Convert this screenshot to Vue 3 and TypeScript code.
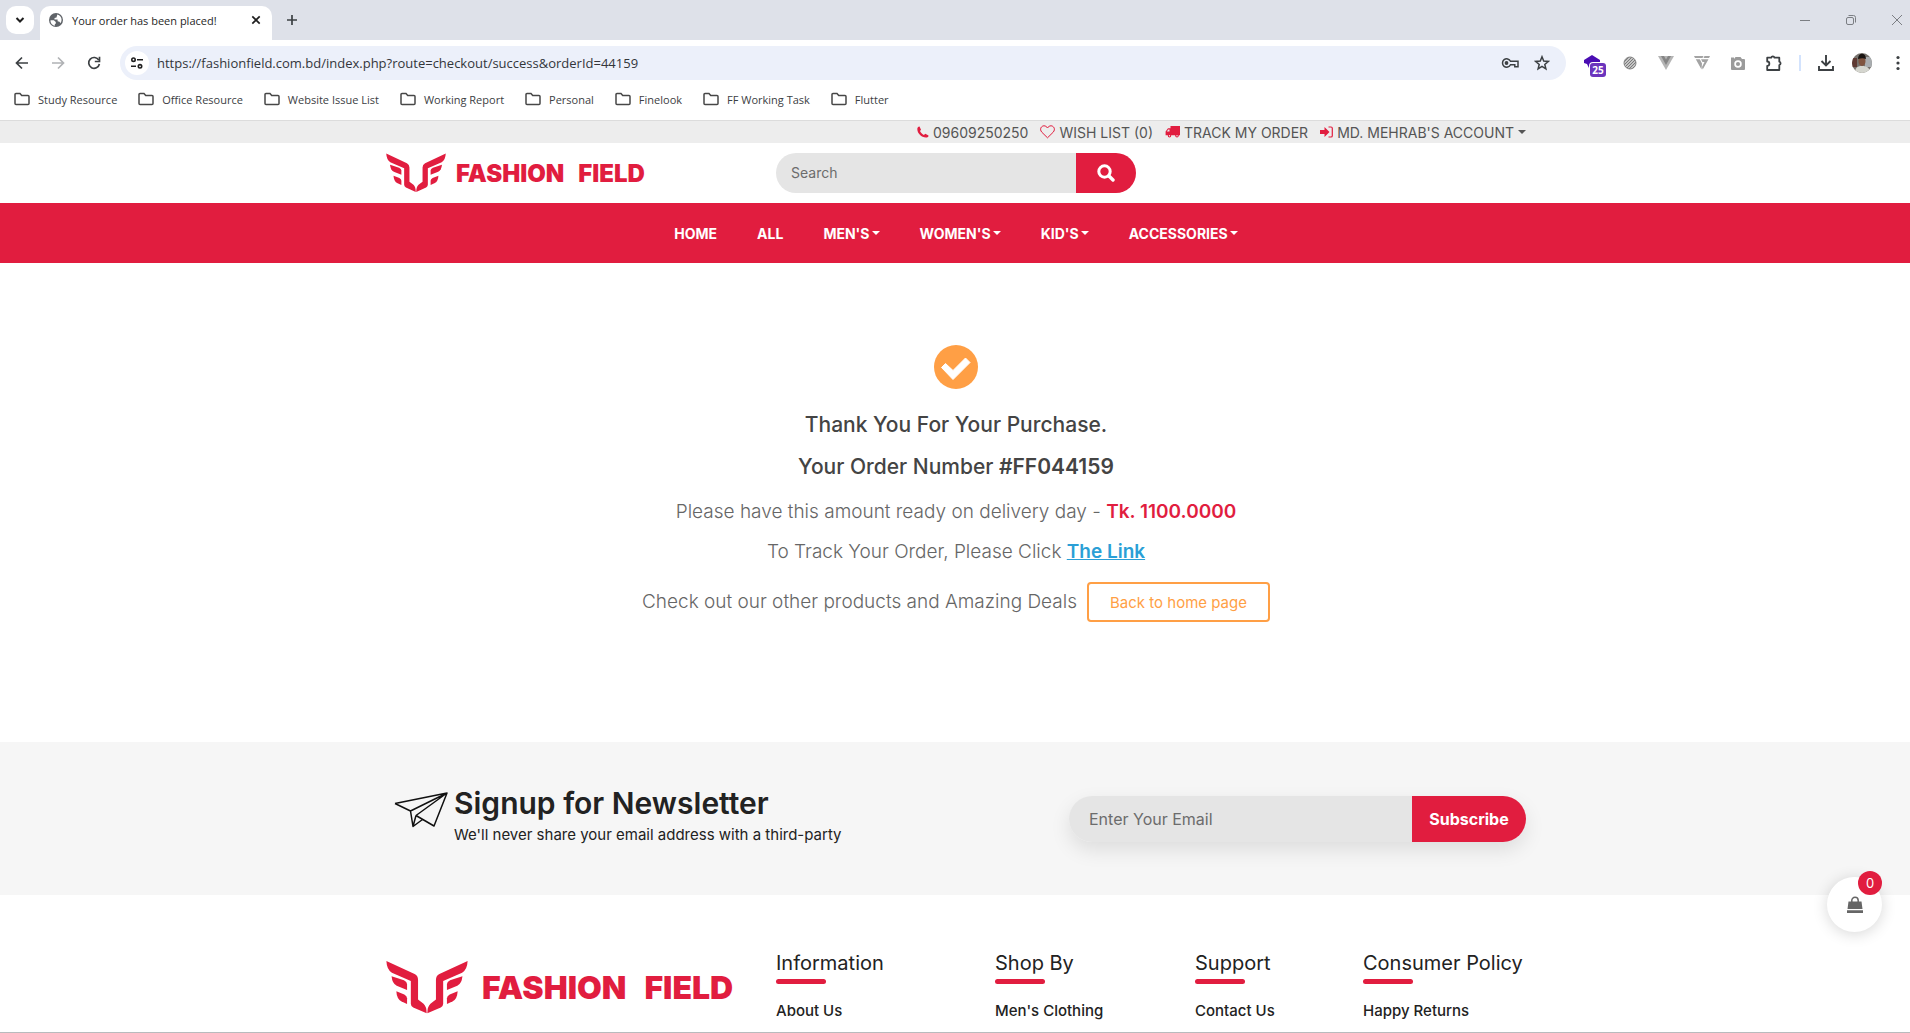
<script setup lang="ts">
import { ref } from 'vue'

interface Column {
  title: string
  link: string
}

const address = ref('https://fashionfield.com.bd/index.php?route=checkout/success&orderId=44159')
const search = ref('')
const email = ref('')

const bookmarks: string[] = [
  'Study Resource',
  'Office Resource',
  'Website Issue List',
  'Working Report',
  'Personal',
  'Finelook',
  'FF Working Task',
  'Flutter',
]

const menu: { label: string; drop: boolean }[] = [
  { label: 'HOME', drop: false },
  { label: 'ALL', drop: false },
  { label: "MEN'S", drop: true },
  { label: "WOMEN'S", drop: true },
  { label: "KID'S", drop: true },
  { label: 'ACCESSORIES', drop: true },
]

const columns: Column[] = [
  { title: 'Information', link: 'About Us' },
  { title: 'Shop By', link: "Men's Clothing" },
  { title: 'Support', link: 'Contact Us' },
  { title: 'Consumer Policy', link: 'Happy Returns' },
]
</script>

<template>
  <div class="window">
    <div class="tabstrip">
      <button class="tab-search" aria-label="Search tabs">
        <svg width="12" height="12" viewBox="0 0 12 12"><path d="M2.500 4 6 7.500 9.500 4" fill="none" stroke="#1f1f1f" stroke-width="2" /></svg>
      </button>
      <div class="tab">
        <svg width="14" height="14" viewBox="0 0 14 14">
          <circle cx="7" cy="7" r="7" fill="#5f6368" />
          <path d="M1.500 7.200h3.300l2 1.800v1.500l-1 .8v1.400C3.200 12.300 1.300 10 1.500 7.200zM8.300 1.500c2.600.5 4.400 2.700 4.300 5.500-.1 1.200-.5 2.300-1.200 3.200l-.9-1.500-1.900-.4V6.500H5.500V5l2-.5z" fill="#fff" />
        </svg>
        <span class="tab-title">Your order has been placed!</span>
        <button class="plain" aria-label="Close tab">
          <svg width="10" height="10" viewBox="0 0 10 10"><path d="M1.300 1.300 8.700 8.700M8.700 1.300 1.300 8.700" stroke="#1f1f1f" stroke-width="1.700" /></svg>
        </button>
      </div>
      <button class="plain new-tab" aria-label="New tab">
        <svg width="12" height="12" viewBox="0 0 12 12"><path d="M6 1v10M1 6h10" stroke="#3c4043" stroke-width="1.700" /></svg>
      </button>
      <div class="controls">
        <button class="plain" aria-label="Minimize"><svg width="12" height="12" viewBox="0 0 12 12"><path d="M1 6.500h10" stroke="#7b7e83" /></svg></button>
        <button class="plain" aria-label="Restore"><svg width="12" height="12" viewBox="0 0 12 12"><g fill="none" stroke="#7b7e83"><rect x="1.500" y="3.500" width="7" height="7" rx="1.500" /><path d="M3.500 1.500h5a2 2 0 0 1 2 2v5" /></g></svg></button>
        <button class="plain" aria-label="Close"><svg width="12" height="12" viewBox="0 0 12 12"><path d="m1 1 10 10M11 1 1 11" stroke="#7b7e83" /></svg></button>
      </div>
    </div>

    <div class="toolbar">
      <div class="history">
        <button class="plain" aria-label="Back"><svg width="16" height="16" viewBox="0 0 16 16"><path d="M14 8H3M8 2.500 2.500 8 8 13.500" fill="none" stroke="#3c4043" stroke-width="1.700" /></svg></button>
        <button class="plain" aria-label="Forward"><svg width="16" height="16" viewBox="0 0 16 16"><path d="M2 8h11M8 2.500 13.500 8 8 13.500" fill="none" stroke="#b0b2b5" stroke-width="1.700" /></svg></button>
        <button class="plain" aria-label="Reload"><svg width="16" height="16" viewBox="0 0 16 16"><path d="M12.800 5.200A5.400 5.400 0 1 0 13.400 9" fill="none" stroke="#3c4043" stroke-width="1.700" /><path d="M13.500 1.800v4.700H8.800" fill="none" stroke="#3c4043" stroke-width="1.700" /></svg></button>
      </div>
      <div class="omnibox">
        <button class="site-info" aria-label="Site information">
          <svg width="14" height="14" viewBox="0 0 14 14"><g fill="none" stroke="#1f1f1f" stroke-width="1.600"><circle cx="3.500" cy="3.700" r="1.700" /><path d="M7 3.700h6M1 10.300h5" /><circle cx="10" cy="10.300" r="1.700" /></g></svg>
        </button>
        <input v-model="address" class="address" type="text" aria-label="Address" />
        <button class="plain" aria-label="Passwords">
          <svg width="18" height="12" viewBox="0 0 18 12"><path d="M9.500 4.200A4.200 4.200 0 1 0 9.500 7.800h4.300v2h3.200V4.200z" fill="none" stroke="#3c4043" stroke-width="1.500" /><circle cx="5.500" cy="6" r="1.900" fill="#3c4043" /></svg>
        </button>
        <button class="plain" aria-label="Bookmark this page">
          <svg width="16" height="16" viewBox="0 0 16 16"><path d="m8 1.800 1.700 4.300 4.600.3-3.500 3 1.100 4.500L8 11.400l-3.900 2.500 1.100-4.500-3.500-3 4.600-.3z" fill="none" stroke="#3c4043" stroke-width="1.500" /></svg>
        </button>
      </div>
      <div class="extensions">
        <button class="plain ext" aria-label="Extension, 25 items">
          <svg width="20" height="16" viewBox="0 0 20 16"><path d="m8 0 8 5v3l-3 5H5L3 9 0 8V5z" fill="#4a0db3" /></svg>
          <span class="ext-count">25</span>
        </button>
        <button class="plain ext" aria-label="Striped extension">
          <svg width="14" height="14" viewBox="0 0 14 14"><clipPath id="disc"><circle cx="7" cy="7" r="6" /></clipPath><circle cx="7" cy="7" r="6" fill="#e4e4e4" stroke="#8a8a8a" /><path d="M0 7 7 0M0 10 10 0M0 13 13 0M2 14 14 2M5 14l9-9M8 14l6-6" stroke="#777" stroke-width="1.100" clip-path="url(#disc)" /></svg>
        </button>
        <button class="plain ext" aria-label="Vue devtools">
          <svg width="16" height="14" viewBox="0 0 16 14"><path d="M0 0h16L8 14z" fill="#b5b5b5" /><path d="M3 0h3l2 3.500L10 0h3L8 9z" fill="#858585" /></svg>
        </button>
        <button class="plain ext" aria-label="Vuetify devtools">
          <svg width="16" height="14" viewBox="0 0 16 14"><path d="M0 0h9.500L8.500 2H1zM10.500 0H16l-1 2H9.500zM1.800 3.200h4L8 7.500l-.5 6zM7 3.200h7.500L8.700 13.500 8 11l2.500-5H8.500z" fill="#a3a3a3" /></svg>
        </button>
        <button class="plain ext" aria-label="Screenshot">
          <svg width="16" height="14" viewBox="0 0 16 14"><path d="M1 1.500h3V3l1.500-2h5L12 3h2a1 1 0 0 1 1 1v9a1 1 0 0 1-1 1H2a1 1 0 0 1-1-1z" fill="#9b9b9b" /><circle cx="8" cy="8" r="2.900" fill="#9b9b9b" stroke="#fff" stroke-width="1.700" /></svg>
        </button>
        <button class="plain ext" aria-label="Extensions">
          <svg width="18" height="18" viewBox="0 0 18 18"><path d="M2.200 3.700h4a1.700 1.700 0 0 1 3.300 0h4.800v4a1.700 1.700 0 0 1 0 3.300v5H2.200v-4.200a2 2 0 0 0 0-4.300z" fill="none" stroke="#3c4043" stroke-width="1.800" stroke-linejoin="round" /></svg>
        </button>
        <span class="divider"></span>
        <button class="plain ext" aria-label="Downloads">
          <svg width="16" height="16" viewBox="0 0 16 16"><path d="M8 0v10M3.500 6 8 10.500 12.500 6M1 11v4h14v-4" fill="none" stroke="#3c4043" stroke-width="1.900" /></svg>
        </button>
        <button class="plain ext" aria-label="Profile">
          <svg width="20" height="20" viewBox="0 0 20 20"><clipPath id="face"><circle cx="10" cy="10" r="10" /></clipPath><g clip-path="url(#face)"><path fill="#77736e" d="M0 0h20v20H0z" /><path fill="#a9adb0" d="M13 4h7v10h-7z" /><path fill="#5f3a33" d="M0 5h5v9H0z" /><path fill="#d5d6cf" d="M3 20c0-6 3-7 7-7s8 1 8 7z" /><ellipse cx="10" cy="8" rx="3.500" ry="5" fill="#80543f" /><path fill="#191412" d="M6 6c0-7 8-7 8 0-2-1-5-1-8 0z" /></g></svg>
        </button>
        <button class="plain ext" aria-label="Menu">
          <svg width="4" height="16" viewBox="0 0 4 16"><g fill="#3c4043"><circle cx="2" cy="2.500" r="1.600" /><circle cx="2" cy="8" r="1.600" /><circle cx="2" cy="13.500" r="1.600" /></g></svg>
        </button>
      </div>
    </div>

    <div class="bookmarks">
      <a v-for="name in bookmarks" :key="name" href="#" class="bookmark">
        <svg width="16" height="14" viewBox="0 0 16 14"><path d="M1 11.500v-9a1 1 0 0 1 1-1h4l1.700 2H14a1 1 0 0 1 1 1v7a1 1 0 0 1-1 1H2a1 1 0 0 1-1-1z" fill="none" stroke="#474747" stroke-width="1.500" /></svg>
        <span>{{ name }}</span>
      </a>
    </div>

    <svg class="symbols" width="0" height="0" aria-hidden="true">
      <symbol id="wings" viewBox="48 96 238 154">
        <g id="wing" fill="#e11d3f">
          <path d="M49 96 131 134Q141 139 141 151V208L157 220Q166 228 166 248L127 231Q120 227 120 220V154L65 130Q50 121 49 96Z" />
          <path d="M64 140 100 152Q109 156 109 163V180L79 168Q66 161 64 140Z" />
          <path d="M78 184 101 193Q109 197 109 204V221L92 213Q79 206 78 184Z" />
        </g>
        <use href="#wing" transform="translate(334 0) scale(-1 1)" />
      </symbol>
    </svg>

    <div class="topbar">
      <div class="container top-links">
        <a href="#">
          <svg width="12" height="12" viewBox="0 0 12 12"><path d="M2.500.6 4 3.800 3 5c.8 1.600 2.200 3 3.900 3.900l1.400-1.100 3.200 1.600c.2 1.400-1 2.200-2.500 2.200C4.300 11.300.3 7.400.3 3 .4 1.600 1.200.5 2.500.6z" fill="#e11d3f" /></svg>
          <span>09609250250</span>
        </a>
        <a href="#">
          <svg width="15" height="14" viewBox="0 0 15 14"><path d="M7.500 12.800 1.800 7.200C-.9 4 1.500.8 4 .8c1.600 0 2.800 1 3.500 2.200C8.200 1.800 9.400.8 11 .8c2.500 0 4.900 3.200 2.200 6.400z" fill="none" stroke="#e11d3f" /></svg>
          <span>WISH LIST (0)</span>
        </a>
        <a href="#">
          <svg width="15" height="12" viewBox="0 0 15 12"><path d="M5.500 0H15v9.300h-1.300a1.800 1.800 0 0 1-3.500 0H6.300a1.800 1.800 0 0 1-3.500 0H.6V5.500L3 2.200h2.500zM1.800 5.500h2.700v-2h-1.200z" fill="#e11d3f" fill-rule="evenodd" /><g fill="#e11d3f"><circle cx="4.500" cy="9.800" r="1.700" /><circle cx="12" cy="9.800" r="1.700" /></g><g fill="#ededed"><circle cx="4.500" cy="9.800" r=".7" /><circle cx="12" cy="9.800" r=".7" /></g></svg>
          <span>TRACK MY ORDER</span>
        </a>
        <a href="#">
          <svg width="13" height="12" viewBox="0 0 13 12"><path d="M0 4h4.500V1l5 5-5 5V8H0z" fill="#e11d3f" /><path d="M8.500 1H11a1.300 1.300 0 0 1 1.300 1.300v7.400A1.300 1.300 0 0 1 11 11H8.500" fill="none" stroke="#e11d3f" stroke-width="1.200" /></svg>
          <span>MD. MEHRAB'S ACCOUNT</span>
          <i class="caret"></i>
        </a>
      </div>
    </div>

    <header class="container masthead">
      <a href="#" class="logo" aria-label="Fashion Field">
        <svg class="mark"><use href="#wings" /></svg>
        <span>FASHION</span><span>FIELD</span>
      </a>
      <form class="search" @submit.prevent>
        <input v-model="search" type="text" placeholder="Search" aria-label="Search" />
        <button type="submit" aria-label="Search">
          <svg width="18" height="18" viewBox="0 0 18 18"><circle cx="7.500" cy="7.500" r="5.700" fill="none" stroke="#fff" stroke-width="3" /><path d="m12 12 4 4" stroke="#fff" stroke-width="3.400" stroke-linecap="round" /></svg>
        </button>
      </form>
    </header>

    <nav class="nav">
      <a v-for="item in menu" :key="item.label" href="#">{{ item.label }}<i v-if="item.drop" class="caret"></i></a>
    </nav>

    <main class="success">
      <svg width="44" height="44" viewBox="0 0 44 44"><circle cx="22" cy="22" r="22" fill="#ff9f45" /><path d="m7.500 22.500 4-4 7.500 7L31.500 13l4.500 4.500-17 17z" fill="#fff" stroke="#fff" stroke-width="1" stroke-linejoin="round" /></svg>
      <h1>Thank You For Your Purchase.</h1>
      <h2>Your Order Number <b>#FF044159</b></h2>
      <p>Please have this amount ready on delivery day - <b class="amount">Tk. 1100.0000</b></p>
      <p>To Track Your Order, Please Click <a href="#" class="track">The Link</a></p>
      <div class="deals">
        <p>Check out our other products and Amazing Deals</p>
        <button type="button">Back to home page</button>
      </div>
    </main>

    <section class="newsletter">
      <div class="container news-row">
        <svg width="54" height="36" viewBox="0 0 54 36"><path d="M1 11.500 53 1 40 34 22 23.500M1 11.500 16.500 19 53 1 22 23.500M16.500 19 19 34.500 22 23.500M19 34.500 28.500 27.500" fill="none" stroke="#111" stroke-width="1.500" stroke-linejoin="round" /></svg>
        <div class="news-text">
          <h3>Signup for Newsletter</h3>
          <p>We'll never share your email address with a third-party</p>
        </div>
        <form class="subscribe" @submit.prevent>
          <input v-model="email" type="email" placeholder="Enter Your Email" aria-label="Email" />
          <button type="submit">Subscribe</button>
        </form>
      </div>
    </section>

    <footer class="footer">
      <div class="container foot-grid">
        <a href="#" class="logo large" aria-label="Fashion Field">
          <svg class="mark"><use href="#wings" /></svg>
          <span>FASHION</span><span>FIELD</span>
        </a>
        <div v-for="column in columns" :key="column.title" class="column">
          <h4>{{ column.title }}</h4>
          <a href="#">{{ column.link }}</a>
        </div>
      </div>
    </footer>

    <button class="cart" aria-label="Cart">
      <svg width="18" height="18" viewBox="0 0 18 18"><path d="M2.500 5.500h13l1 7.500h-15zM1 14.200h16V17H1z" fill="#666" /><path d="M5.800 8V4.500a3.200 3.200 0 0 1 6.400 0V8" fill="none" stroke="#666" stroke-width="1.500" /></svg>
      <span>0</span>
    </button>
  </div>
</template>

<style>
body {
  margin: 0;
  background: #fff;
}
</style>

<style scoped>
.window {
  display: flex;
  flex-direction: column;
  min-height: 100vh;
  font-family: Inter, "Liberation Sans", sans-serif;
  color: #222;
}
.window *,
.window {
  box-sizing: border-box;
}
svg {
  display: block;
  flex: none;
}
.symbols {
  position: absolute;
}
button,
input {
  font-family: inherit;
  border: 0;
  padding: 0;
  margin: 0;
}
a {
  color: inherit;
  text-decoration: none;
}
h1, h2, h3, h4, p {
  margin: 0;
}
.plain {
  display: flex;
  align-items: center;
  justify-content: center;
  background: none;
}

/* browser frame */
.tabstrip,
.toolbar,
.bookmarks {
  font-family: "Open Sans", "Noto Sans", sans-serif;
}
.tabstrip {
  display: flex;
  align-items: center;
  height: 40px;
  background: #dee1e9;
}
.tab-search {
  display: flex;
  align-items: center;
  justify-content: center;
  width: 28px;
  height: 28px;
  margin: 0 6px;
  border-radius: 10px;
  background: #fff;
}
.tab {
  display: flex;
  align-items: center;
  align-self: flex-end;
  width: 232px;
  height: 34px;
  padding: 0 11px 6px 9px;
  border-radius: 10px 10px 0 0;
  background: #fff;
}
.tab-title {
  flex: 1;
  padding-left: 9px;
  font-size: 11px;
  color: #1f1f1f;
  white-space: nowrap;
}
.new-tab {
  margin-left: 14px;
}
.controls {
  display: flex;
  gap: 34px;
  margin-left: auto;
  padding-right: 7px;
}
.toolbar {
  display: flex;
  align-items: center;
  height: 46px;
}
.history {
  display: flex;
  gap: 20px;
  padding: 0 18px 0 14px;
}
.omnibox {
  display: flex;
  align-items: center;
  flex: 1;
  gap: 15px;
  height: 34px;
  padding: 0 16px 0 5px;
  border-radius: 17px;
  background: #ecf0fa;
}
.site-info {
  display: flex;
  align-items: center;
  justify-content: center;
  width: 24px;
  height: 24px;
  border-radius: 50%;
  background: #fff;
}
.address {
  flex: 1;
  margin-left: -7px;
  background: none;
  font-size: 13px;
  color: #33363a;
}
.extensions {
  display: flex;
  align-items: center;
  gap: 12px;
  padding-left: 16px;
}
.ext {
  position: relative;
  width: 24px;
  height: 24px;
}
.ext-count {
  position: absolute;
  left: 8px;
  top: 12px;
  width: 16px;
  height: 14px;
  border-radius: 3px;
  background: #6b34bd;
  box-shadow: 0 0 0 1px #fff;
  color: #fff;
  font-size: 10px;
  font-weight: 700;
  line-height: 14px;
}
.divider {
  width: 2px;
  height: 16px;
  margin: 0 1px;
  background: #d3e3fd;
}
.bookmarks {
  display: flex;
  align-items: center;
  gap: 21px;
  height: 35px;
  padding: 0 14px 8px;
  border-bottom: 1px solid #dcdcdc;
}
.bookmark {
  display: flex;
  align-items: center;
  gap: 8px;
  font-size: 11px;
  color: #3c4043;
  white-space: nowrap;
}

/* shop */
.container {
  width: 100%;
  max-width: 1142px;
  margin: 0 auto;
  padding-left: 2px;
}
.caret {
  display: inline-block;
  border: 4px solid transparent;
  border-top-color: currentColor;
  border-bottom: 0;
}
.topbar {
  background: #ededed;
  color: #555;
}
.top-links {
  display: flex;
  align-items: center;
  justify-content: flex-end;
  gap: 12px;
  height: 22px;
  font-size: 14px;
}
.top-links a {
  display: flex;
  align-items: center;
  gap: 4px;
}
.masthead {
  display: grid;
  grid-template-columns: 390px 360px;
  align-items: center;
  height: 60px;
}
.logo {
  display: flex;
  align-items: center;
  gap: 10px;
  color: #e11d3f;
  font-size: 24px;
  font-weight: 900;
}
.logo span + span {
  margin-left: 4px;
}
.mark {
  width: 60px;
  height: 40px;
}
.logo.large {
  gap: 14px;
  font-size: 32px;
}
.large .mark {
  width: 82px;
  height: 53px;
}
.search {
  display: flex;
  height: 40px;
  border-radius: 20px;
  overflow: hidden;
}
.search input {
  flex: 1;
  min-width: 0;
  padding: 0 15px 1px;
  background: #e5e5e5;
  font-size: 14px;
}
input::placeholder {
  color: #6c6c6c;
  opacity: 1;
}
.search button {
  display: flex;
  align-items: center;
  justify-content: center;
  width: 60px;
  background: #e11d3f;
}
.nav {
  display: flex;
  align-items: center;
  justify-content: center;
  gap: 40px;
  height: 60px;
  padding-left: 2px;
  background: #e11d3f;
  color: #fff;
  font-size: 14px;
  font-weight: 700;
}
.nav a {
  display: flex;
  align-items: center;
  gap: 2px;
}
.success {
  display: flex;
  flex-direction: column;
  align-items: center;
  min-height: 479px;
  padding: 82px 0 0 2px;
  color: #666;
}
.success h1,
.success h2 {
  color: #444;
  font-size: 21px;
  font-weight: 500;
  line-height: 26px;
}
.success h1 {
  margin-top: 23px;
}
.success h2 {
  margin-top: 16px;
}
.success b {
  font-weight: 600;
}
.success p {
  font-size: 19px;
  font-weight: 300;
  line-height: 24px;
}
.success > p {
  margin-top: 16px;
}
.success h2 + p {
  margin-top: 20px;
}
.amount {
  color: #e11d3f;
}
.track {
  color: #2a9fd6;
  font-weight: 600;
  text-decoration: underline;
}
.deals {
  display: flex;
  align-items: center;
  gap: 10px;
  margin-top: 18px;
}
.deals button {
  width: 183px;
  height: 40px;
  border: 2px solid #ff9f45;
  border-radius: 4px;
  background: #fff;
  color: #ff9f45;
  font-size: 15px;
  font-weight: 400;
}
.newsletter {
  background: #f6f6f6;
}
.news-row {
  display: flex;
  align-items: flex-start;
  height: 153px;
  padding: 43px 0 0 10px;
}
.news-row > svg {
  margin-top: 7px;
}
.news-text {
  padding-left: 6px;
}
.news-text h3 {
  font-size: 30px;
  font-weight: 600;
  line-height: 36px;
}
.news-text p {
  margin-top: 4px;
  font-size: 15px;
  line-height: 20px;
}
.subscribe {
  display: flex;
  width: 457px;
  height: 46px;
  margin: 11px 0 0 auto;
  border-radius: 23px;
  box-shadow: 0 8px 20px rgba(0, 0, 0, 0.1);
}
.subscribe input {
  flex: 1;
  min-width: 0;
  padding: 0 20px 1px;
  border-radius: 23px 0 0 23px;
  background: #e5e5e5;
  font-size: 16px;
}
.subscribe button {
  width: 114px;
  border-radius: 0 23px 23px 0;
  background: #e11d3f;
  color: #fff;
  font-size: 16px;
  font-weight: 700;
}
.footer {
  flex: 1;
  border-bottom: 1px solid #b8bbbd;
}
.foot-grid {
  display: grid;
  grid-template-columns: 390px 219px 200px 168px 1fr;
  padding-top: 56px;
}
.foot-grid .logo {
  align-self: start;
  margin-top: 10px;
}
.column {
  white-space: nowrap;
}
.column h4 {
  font-size: 20px;
  font-weight: 400;
  line-height: 24px;
}
.column h4::after {
  content: "";
  display: block;
  width: 50px;
  height: 5px;
  margin: 4px 0 17px;
  border-radius: 3px;
  background: #e11d3f;
}
.column a {
  display: block;
  font-size: 15px;
  font-weight: 500;
  line-height: 20px;
}
.cart {
  position: fixed;
  right: 28px;
  bottom: 101px;
  display: flex;
  align-items: center;
  justify-content: center;
  width: 55px;
  height: 55px;
  border-radius: 50%;
  background: #fff;
  box-shadow: 0 2px 15px rgba(0, 0, 0, 0.16);
}
.cart span {
  position: absolute;
  top: -6px;
  right: 0;
  width: 24px;
  height: 24px;
  border-radius: 50%;
  background: #e11d3f;
  color: #fff;
  font-size: 13px;
  line-height: 24px;
}
</style>
